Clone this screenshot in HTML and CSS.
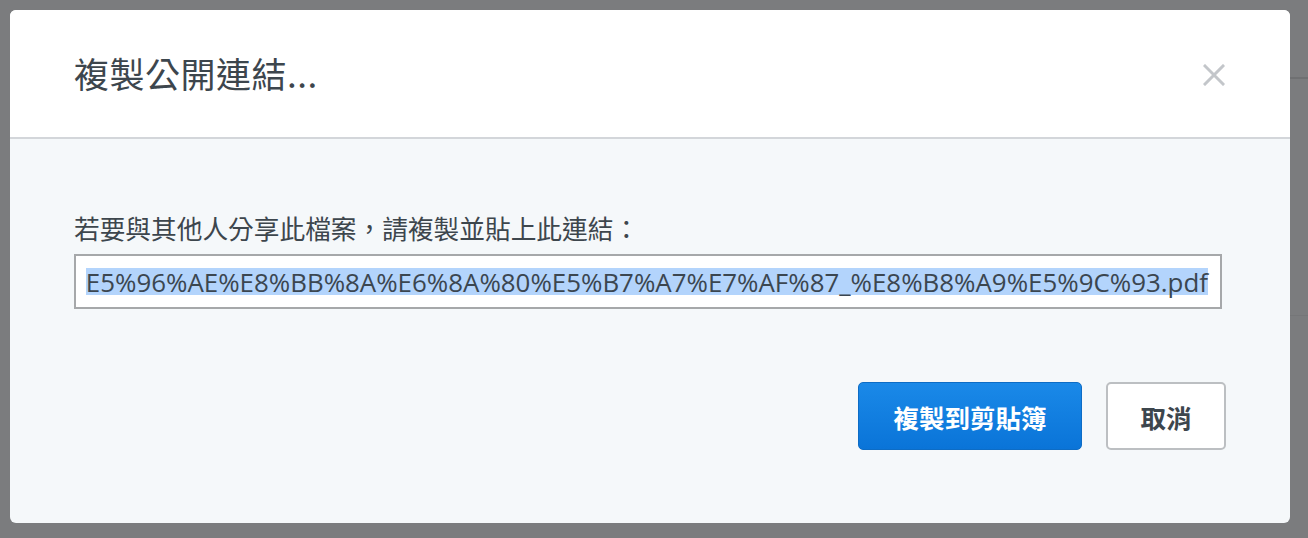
FILE: index.html
```html
<!DOCTYPE html>
<html lang="zh-Hant">
<head>
<meta charset="utf-8">
<link rel="stylesheet" href="styles.css">
</head>
<body>
<div class="backdrop">
  <div class="bg-line bg-line-1"></div>
  <div class="bg-line bg-line-2"></div>
  <div class="modal">
    <div class="modal-header">
      <h1 class="modal-title">複製公開連結...</h1>
      <button class="close-btn" aria-label="關閉">
        <svg width="22" height="22" viewBox="0 0 22 22"><path d="M2 2 L20 20 M20 2 L2 20" stroke="#c3c6ca" stroke-width="3" stroke-linecap="square" fill="none"/></svg>
      </button>
    </div>
    <div class="modal-body">
      <p class="modal-label">若要與其他人分享此檔案，請複製並貼上此連結：</p>
      <div class="link-input"><span class="link-text">E5%96%AE%E8%BB%8A%E6%8A%80%E5%B7%A7%E7%AF%87_%E8%B8%A9%E5%9C%93.pdf</span></div>
      <div class="modal-actions">
        <button class="btn btn-primary">複製到剪貼簿</button>
        <button class="btn btn-secondary">取消</button>
      </div>
    </div>
  </div>
</div>
</body>
</html>
```

FILE: styles.css
```css
html, body {
  margin: 0;
  padding: 0;
  width: 1308px;
  height: 538px;
  overflow: hidden;
}
body {
  background: #7b7c7e;
  font-family: "Open Sans", "Noto Sans CJK TC", sans-serif;
  color: #3d464d;
}
.backdrop {
  position: relative;
  width: 1308px;
  height: 538px;
  padding: 10px 18px 0 10px;
  box-sizing: border-box;
}
.bg-line {
  position: absolute;
  right: 0;
  width: 30px;
  height: 2px;
  background: #6f7072;
}
.bg-line-1 { top: 77px; }
.bg-line-2 { top: 315px; height: 1px; background: #757678; }
.modal {
  position: relative;
  width: 1280px;
  height: 513px;
  border-radius: 6px;
  overflow: hidden;
  background: #f5f8fa;
  display: flex;
  flex-direction: column;
}
.modal-header {
  height: 127px;
  background: #ffffff;
  border-bottom: 2px solid #d3d6da;
  display: flex;
  align-items: center;
  justify-content: space-between;
  padding: 0 65px 0 64px;
  flex-shrink: 0;
}
.modal-title {
  margin: 0;
  font-size: 35px;
  font-weight: 400;
  line-height: 1;
  color: #3d464d;
  font-family: "Noto Sans CJK TC", sans-serif;
  padding-bottom: 2px;
  letter-spacing: 0.5px;
}
.close-btn {
  border: 0;
  background: transparent;
  padding: 0;
  width: 22px;
  height: 22px;
  display: flex;
  margin-top: 2px;
}
.modal-body {
  flex: 1;
  padding: 71px 64px 0 64px;
  display: flex;
  flex-direction: column;
}
.modal-label {
  margin: 0;
  font-family: "Noto Sans CJK TC", sans-serif;
  font-size: 25.7px;
  line-height: 36px;
  color: #3d464d;
}
.link-input {
  margin-top: 8px;
  margin-right: 4px;
  height: 55px;
  box-sizing: border-box;
  border: 2px solid #a6a8aa;
  background: #ffffff;
  display: flex;
  align-items: center;
  justify-content: flex-end;
  padding: 0 12px 0 8px;
  overflow: hidden;
}
.link-text {
  white-space: nowrap;
  background: #b3d4fc;
  font-family: "Open Sans", sans-serif;
  font-size: 25.9px;
  line-height: 26px;
  color: #3b4650;
  padding-top: 1px;
}
.modal-actions {
  margin-top: 73px;
  display: flex;
  justify-content: flex-end;
  gap: 24px;
}
.btn {
  height: 68px;
  box-sizing: border-box;
  font-family: "Noto Sans CJK TC", sans-serif;
  font-size: 25.5px;
  font-weight: 700;
  border-radius: 5px;
  padding: 0;
  cursor: pointer;
}
.btn-primary {
  width: 224px;
  background: linear-gradient(#1a89e8, #0a74d8);
  border: 1px solid #0d6cc5;
  color: #ffffff;
}
.btn-secondary {
  width: 120px;
  background: #ffffff;
  border: 2px solid #bcbfc2;
  color: #3d464d;
}
```
